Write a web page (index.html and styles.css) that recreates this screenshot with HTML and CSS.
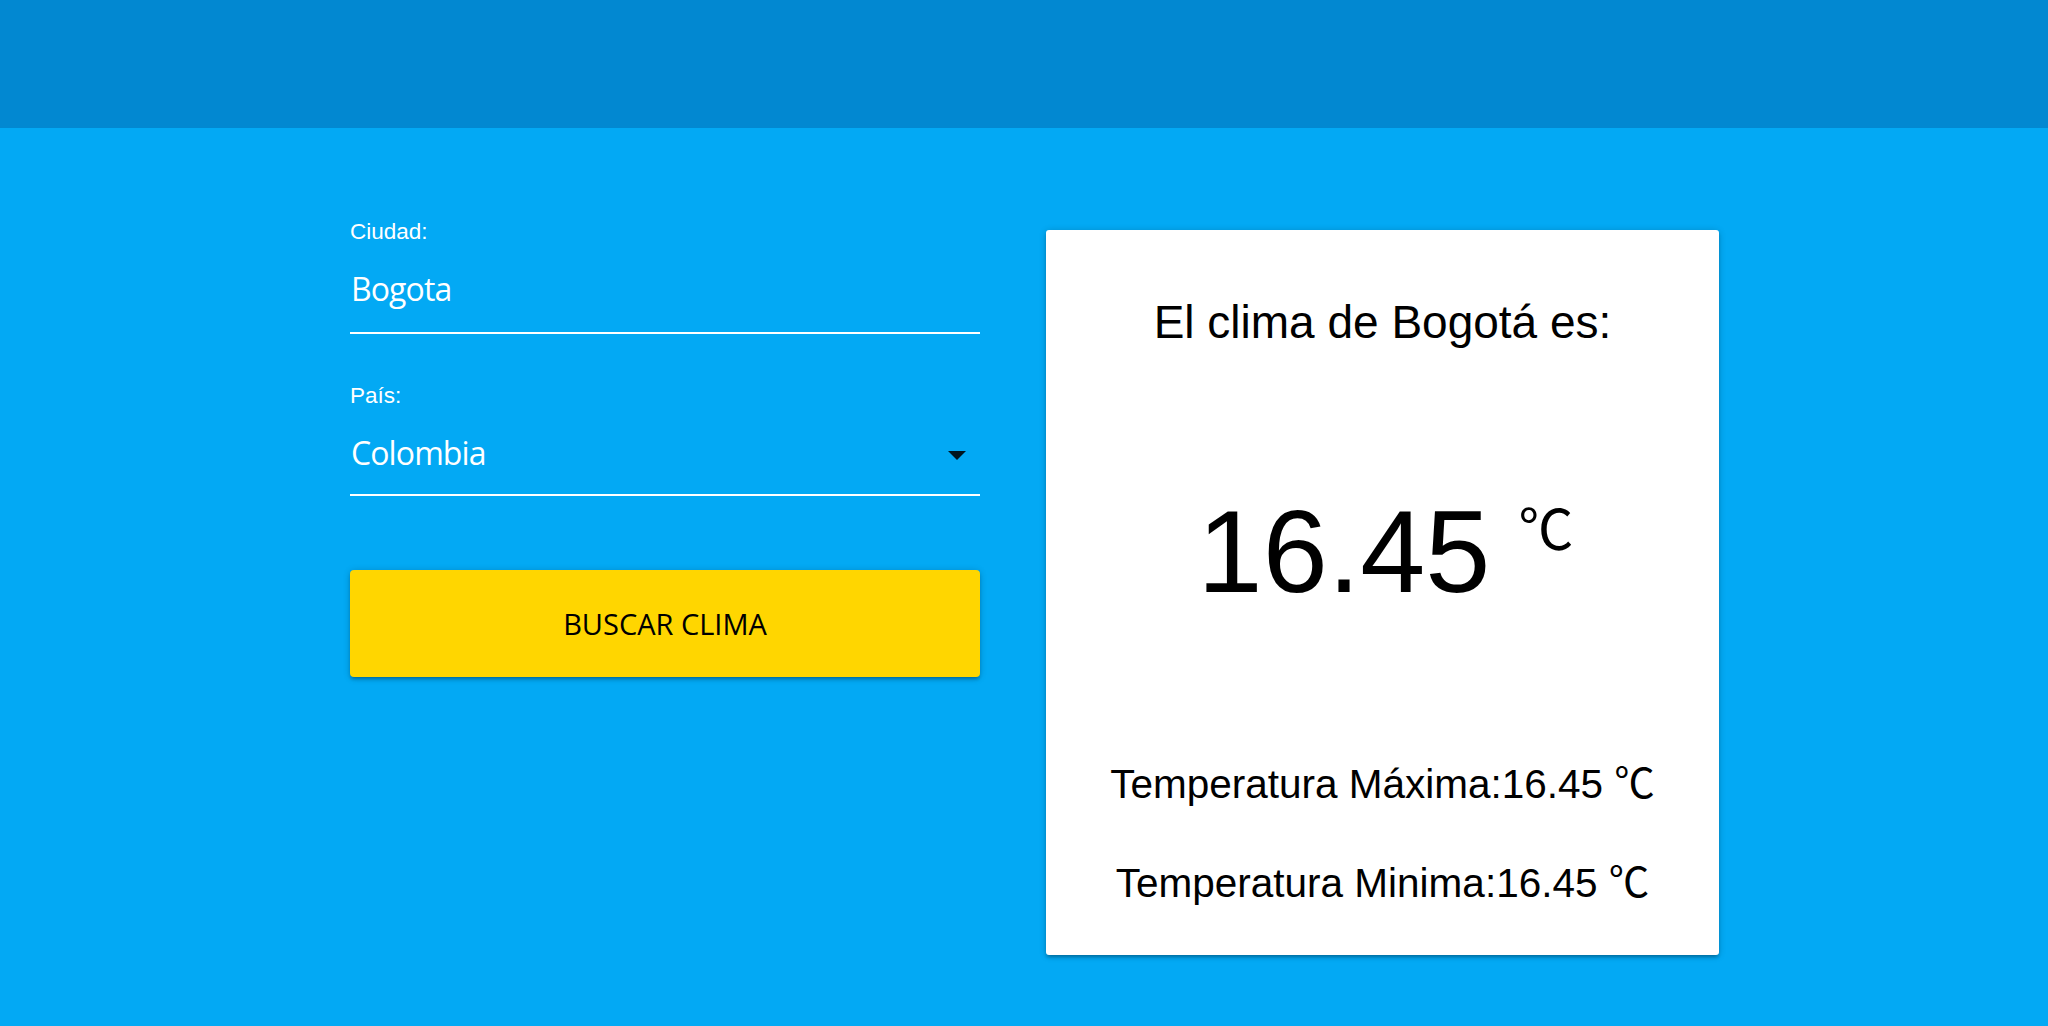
FILE: index.html
```html
<!DOCTYPE html>
<html lang="es">
<head>
<meta charset="utf-8">
<title>Clima</title>
<link rel="stylesheet" href="styles.css">
</head>
<body>
<header class="topbar"></header>
<main class="main">
  <form class="search">
    <div class="field">
      <label class="field-label">Ciudad:</label>
      <div class="field-value">Bogota</div>
    </div>
    <div class="field field-select">
      <label class="field-label">País:</label>
      <div class="field-value">
        <span>Colombia</span>
        <span class="caret"></span>
      </div>
    </div>
    <button type="button" class="btn">BUSCAR CLIMA</button>
  </form>
  <section class="card">
    <h2 class="card-title">El clima de Bogotá es:</h2>
    <div class="temp">
      <span class="temp-value">16.45</span>
      <span class="temp-unit">℃</span>
    </div>
    <p class="row">Temperatura Máxima:16.45 ℃</p>
    <p class="row">Temperatura Minima:16.45 ℃</p>
  </section>
</main>
</body>
</html>
```
FILE: styles.css
```css
html, body {
  margin: 0;
  padding: 0;
}
body {
  background: #03a9f4;
  font-family: "Liberation Sans", Arial, "Noto Sans CJK JP", sans-serif;
  min-height: 1026px;
}
.topbar {
  height: 128px;
  background: #0288d1;
}
.main {
  display: flex;
  align-items: flex-start;
  padding: 91px 0 0 350px;
}
.search {
  width: 630px;
  margin: 0;
}
.field {
  border-bottom: 2px solid #fff;
}
.field + .field {
  margin-top: 49px;
}
.field-label {
  display: block;
  color: #fff;
  font-size: 22.5px;
  line-height: 26px;
  margin-bottom: 21px;
}
.field-value {
  display: flex;
  align-items: center;
  justify-content: space-between;
  color: #fff;
  font-family: "Open Sans", "Noto Sans", sans-serif;
  font-size: 32px;
  letter-spacing: -0.9px;
  line-height: 44px;
  height: 44px;
  padding: 1px 0 21px 1px;
}
.field-select .field-value {
  padding: 1px 0 19px 1px;
}
.caret {
  width: 0;
  height: 0;
  border-left: 9.5px solid transparent;
  border-right: 9.5px solid transparent;
  border-top: 9.5px solid rgba(0, 0, 0, 0.87);
  margin: 4px 14px 0 0;
}
.btn {
  display: block;
  width: 630px;
  height: 107px;
  margin-top: 74px;
  border: none;
  border-radius: 4px;
  background: #ffd600;
  color: #000;
  font-family: "Open Sans", "Noto Sans", sans-serif;
  font-size: 29px;
  padding: 0;
  box-shadow: 0 3px 3px rgba(0, 0, 0, 0.14), 0 4px 2px -3px rgba(0, 0, 0, 0.12), 0 1px 7px rgba(0, 0, 0, 0.2);
}
.card {
  box-sizing: border-box;
  width: 673px;
  height: 725px;
  margin: 11px 0 0 66px;
  padding-top: 66px;
  background: #fff;
  border-radius: 3px;
  display: flex;
  flex-direction: column;
  align-items: center;
  color: #000;
  box-shadow: 0 3px 3px rgba(0, 0, 0, 0.14), 0 4px 2px -3px rgba(0, 0, 0, 0.12), 0 1px 7px rgba(0, 0, 0, 0.2);
}
.card-title {
  margin: 0;
  font-size: 46px;
  line-height: 52px;
  font-weight: normal;
}
.temp {
  display: flex;
  align-items: flex-start;
  height: 130px;
  margin-top: 139px;
  padding-left: 6px;
}
.temp-value {
  font-size: 117px;
  line-height: 130px;
}
.temp-unit {
  font-size: 55px;
  line-height: 55px;
  margin: 16px 0 0 28px;
}
.row {
  margin: 0;
  font-size: 40.5px;
  line-height: 44px;
}
.temp + .row {
  margin-top: 145px;
}
.row + .row {
  margin-top: 55px;
}
```
